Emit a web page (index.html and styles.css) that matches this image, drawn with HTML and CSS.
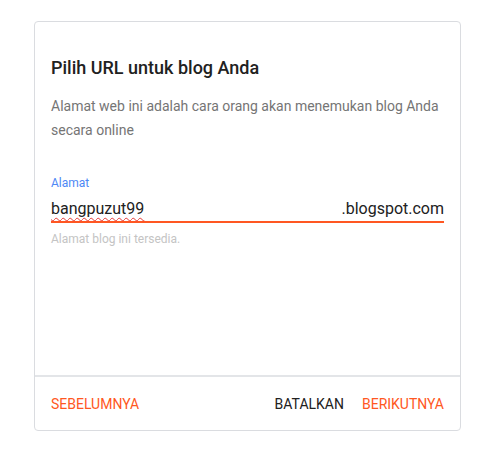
FILE: index.html
```html
<!DOCTYPE html>
<html>
<head>
<meta charset="utf-8">
<link rel="stylesheet" href="styles.css">
</head>
<body>
<div class="card">
  <div class="content">
    <h1 class="title">Pilih URL untuk blog Anda</h1>
    <p class="desc">Alamat web ini adalah cara orang akan menemukan blog Anda secara online</p>
    <div class="label">Alamat</div>
    <div class="field">
      <span class="value">bangpuzut99</span>
      <span class="suffix">.blogspot.com</span>
    </div>
    <div class="helper">Alamat blog ini tersedia.</div>
  </div>
  <div class="footer">
    <span class="btn accent">SEBELUMNYA</span>
    <div class="right">
      <span class="btn dark">BATALKAN</span>
      <span class="btn accent">BERIKUTNYA</span>
    </div>
  </div>
</div>
</body>
</html>
```
FILE: styles.css
```css
html, body { margin: 0; padding: 0; background: #fff; }
body { font-family: Roboto, "Noto Sans", Arial, sans-serif; }
.card {
  margin: 21px 0 0 34px;
  width: 425px;
  height: 408px;
  border: 1px solid #dadce0;
  border-radius: 4px;
  display: flex;
  flex-direction: column;
  box-sizing: content-box;
}
.content {
  flex: 1;
  padding: 34px 16px 0 16px;
  display: flex;
  flex-direction: column;
}
.title {
  margin: 0;
  font-size: 18px;
  font-weight: 500;
  line-height: 24px;
  color: #212121;
}
.desc {
  margin: 14px 0 0 0;
  font-size: 14px;
  line-height: 24px;
  color: #757575;
}
.label {
  margin-top: 33px;
  font-size: 12px;
  line-height: 16px;
  color: #4d88f5;
}
.field {
  margin-top: 6px;
  display: flex;
  justify-content: space-between;
  font-size: 16px;
  line-height: 24px;
  color: #212121;
  border-bottom: 2px solid #ff5722;
}
.value {
  text-decoration: underline wavy #e53935;
  text-decoration-thickness: 1px;
  text-underline-offset: 3px;
}
.helper {
  margin-top: 8px;
  font-size: 12px;
  line-height: 16px;
  color: #c4c4c4;
}
.footer {
  height: 53px;
  border-top: 2px solid #e3e5e8;
  display: flex;
  align-items: center;
  justify-content: space-between;
  padding: 0 16px;
}
.right { display: flex; gap: 18px; }
.btn {
  font-size: 14px;
  font-weight: 400;
  letter-spacing: 0;
}
.accent { color: #ff5722; }
.dark { color: #212121; }
```
